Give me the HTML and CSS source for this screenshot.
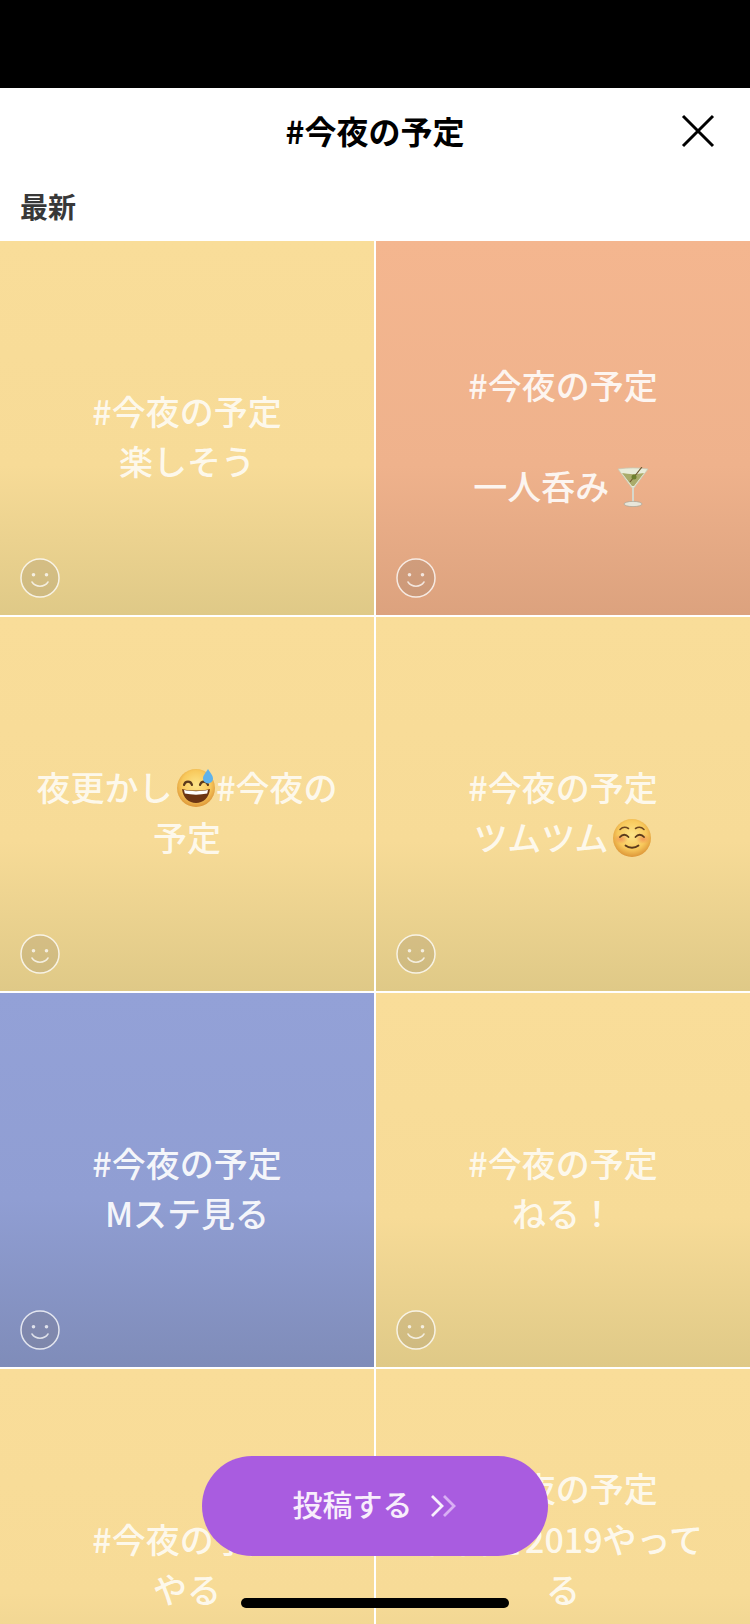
FILE: index.html
```html
<!DOCTYPE html>
<html lang="ja">
<head>
<meta charset="utf-8">
<title>#今夜の予定</title>
<link rel="stylesheet" href="styles.css">
</head>
<body>
<svg class="defs" width="0" height="0" aria-hidden="true">
  <defs>
    <radialGradient id="face" cx="50%" cy="42%" r="58%">
      <stop offset="0" stop-color="#fde58a"/>
      <stop offset=".65" stop-color="#f8c95c"/>
      <stop offset="1" stop-color="#dd9638"/>
    </radialGradient>
    <radialGradient id="blush" cx="50%" cy="50%" r="50%">
      <stop offset="0" stop-color="#f08a55" stop-opacity=".75"/>
      <stop offset="1" stop-color="#f08a55" stop-opacity="0"/>
    </radialGradient>
    <symbol id="smiley" viewBox="0 0 40 40">
      <circle cx="20" cy="20" r="19" fill="rgba(110,100,90,.16)" stroke="#fff" stroke-opacity=".78" stroke-width="1.500"/>
      <circle cx="13.500" cy="16.800" r="1.800" fill="#fff" fill-opacity=".75"/>
      <circle cx="26.500" cy="16.800" r="1.800" fill="#fff" fill-opacity=".75"/>
      <path d="M12 24c3.500 5.500 12.500 5.500 16 0" fill="none" stroke="#fff" stroke-opacity=".75" stroke-width="1.500" stroke-linecap="round"/>
    </symbol>
  </defs>
</svg>
<div class="screen">
  <div class="status"></div>
  <header class="head">
    <div class="title-row">
      <span></span>
      <h1 class="title">#今夜の予定</h1>
      <svg class="close" viewBox="0 0 34 34"><path d="M2 2l30 30M32 2L2 32" stroke="#000" stroke-width="3" fill="none"/></svg>
    </div>
    <div class="label">最新</div>
  </header>
  <main class="grid">
    <article class="cell yellow">
      <p class="msg">#今夜の予定<br>楽しそう</p>
      <svg class="smile"><use href="#smiley"/></svg>
    </article>
    <article class="cell peach">
      <p class="msg">#今夜の予定<br><br>一人呑み <svg class="emoji" viewBox="0 0 40 40">
        <path d="M5 2c9-1.500 21-1.500 30 0L21 21h-2z" fill="#e9ecd9" stroke="#c9c9b5" stroke-width=".8"/>
        <path d="M9 6c7 1.500 15 1.500 22 0L21 19h-2z" fill="#a9ab6a"/>
        <path d="M19 21h2v15h-2z" fill="#d8d8cc"/>
        <ellipse cx="20" cy="37" rx="9" ry="2.600" fill="#e8e6da" stroke="#a8a69a" stroke-width=".7"/>
        <path d="M17 15L29 0" stroke="#6f5a32" stroke-width="1.200"/>
        <circle cx="21" cy="10" r="2.500" fill="#6d7f2e"/>
      </svg></p>
      <svg class="smile"><use href="#smiley"/></svg>
    </article>
    <article class="cell yellow">
      <p class="msg">夜更かし <svg class="emoji" viewBox="0 0 40 40">
        <circle cx="20" cy="20" r="19" fill="url(#face)"/>
        <path d="M8 17c1-4.500 7-4.500 8 0M24 17c1-4.500 7-4.500 8 0" fill="none" stroke="#5b3a1c" stroke-width="2.200" stroke-linecap="round"/>
        <path d="M6 21c8 2 20 2 28 0-1 9-7 14-14 14S7 30 6 21z" fill="#6b3413"/>
        <path d="M8 22c7 1.500 17 1.500 24 0l-.8 3.500c-7 1.500-15.400 1.500-22.400 0z" fill="#fff"/>
        <path d="M32 1c2.500 4 5 6.500 5 9.500a5 5 0 0 1-10 0C27 7.500 29.500 5 32 1z" fill="#5fb2ea"/>
      </svg>#今夜の<br>予定</p>
      <svg class="smile"><use href="#smiley"/></svg>
    </article>
    <article class="cell yellow">
      <p class="msg">#今夜の予定<br>ツムツム <svg class="emoji" viewBox="0 0 40 40">
        <circle cx="20" cy="20" r="19" fill="url(#face)"/>
        <ellipse cx="9" cy="21" rx="7" ry="5" fill="url(#blush)"/>
        <ellipse cx="31" cy="21" rx="7" ry="5" fill="url(#blush)"/>
        <path d="M8 11.500c2.500-2.500 6-2.500 8.500-1M23.500 10.500c2.500-1.500 6-1.500 8.500 1" fill="none" stroke="#6b4520" stroke-width="1.500" stroke-linecap="round"/>
        <path d="M8 19c2.500-3 6-3 8.500 0M23.500 19c2.500-3 6-3 8.500 0" fill="none" stroke="#5b3a1c" stroke-width="1.800" stroke-linecap="round"/>
        <path d="M13.500 27.500c3.500 3 9.500 3 13 0" fill="none" stroke="#5b3a1c" stroke-width="1.800" stroke-linecap="round"/>
      </svg></p>
      <svg class="smile"><use href="#smiley"/></svg>
    </article>
    <article class="cell blue">
      <p class="msg">#今夜の予定<br>Mステ見る</p>
      <svg class="smile"><use href="#smiley"/></svg>
    </article>
    <article class="cell yellow">
      <p class="msg">#今夜の予定<br>ねる！</p>
      <svg class="smile"><use href="#smiley"/></svg>
    </article>
    <article class="cell yellow">
      <p class="msg">#今夜の予定<br>やる</p>
    </article>
    <article class="cell yellow">
      <p class="msg">#今夜の予定<br>紅白を2019やって<br>る<br><br></p>
    </article>
  </main>
  <button class="post" type="button">
    <span>投稿する</span>
    <svg class="chev" viewBox="0 0 28 24">
      <path d="M2 2l10 10L2 22" fill="none" stroke="#fff" stroke-opacity=".9" stroke-width="2.800"/>
      <path d="M14 2l10 10-10 10" fill="none" stroke="#d9aff4" stroke-width="2.800"/>
    </svg>
  </button>
  <div class="home"></div>
</div>
</body>
</html>
```
FILE: styles.css
```css
* { box-sizing: border-box; }
html, body { margin: 0; padding: 0; }
body {
  width: 750px;
  height: 1624px;
  overflow: hidden;
  background: #fff;
  font-family: "Noto Sans CJK JP", "Noto Sans", sans-serif;
}
.defs { position: absolute; }
.screen { position: relative; width: 750px; height: 1624px; overflow: hidden; }
.status { height: 88px; background: #000; }
.head { height: 153px; background: #fff; }
.title-row {
  height: 84px;
  display: grid;
  grid-template-columns: 1fr auto 1fr;
  align-items: center;
}
.title {
  margin: 0;
  font-size: 32px;
  line-height: 1;
  font-weight: 700;
  color: #000;
}
.close { width: 34px; height: 34px; justify-self: end; margin: 2px 35px 0 0; }
.label {
  padding: 14px 0 0 20px;
  font-size: 28px;
  line-height: 40px;
  font-weight: 700;
  color: #383838;
}
.grid {
  display: grid;
  grid-template-columns: 374px 374px;
  grid-auto-rows: 374px;
  gap: 2px;
}
.cell {
  position: relative;
  display: flex;
  align-items: center;
  justify-content: center;
  padding-top: 16px;
}
.yellow { background: linear-gradient(#f9dd99 0%, #f7db97 60%, #dfc987 100%); }
.peach { background: linear-gradient(#f4b68f 0%, #efb28c 60%, #dca27e 100%); }
.blue { background: linear-gradient(#93a1d7 0%, #909ed3 55%, #7f8cb9 100%); }
.msg {
  margin: 0;
  text-align: center;
  white-space: nowrap;
  font-size: 34px;
  line-height: 50.500px;
  font-weight: 500;
  color: rgba(255, 255, 255, .84);
}
.blue .msg { color: rgba(255, 255, 255, .92); }
.peach .msg { color: rgba(255, 255, 255, .88); }
.emoji { width: 40px; height: 40px; vertical-align: -7px; margin-left: -4px; }
.smile { position: absolute; left: 20px; bottom: 17px; width: 40px; height: 40px; }
.post {
  position: absolute;
  left: 202px;
  top: 1456px;
  width: 346px;
  height: 100px;
  padding: 0 0 6px;
  border: 0;
  border-radius: 50px;
  background: #a95ce0;
  display: flex;
  align-items: center;
  justify-content: center;
  gap: 17px;
  font-family: inherit;
  font-size: 30px;
  font-weight: 500;
  color: #f8eefc;
}
.chev { width: 28px; height: 24px; margin-top: 6px; }
.home {
  position: absolute;
  left: 241px;
  top: 1598px;
  width: 268px;
  height: 10px;
  border-radius: 5px;
  background: #000;
}
```
